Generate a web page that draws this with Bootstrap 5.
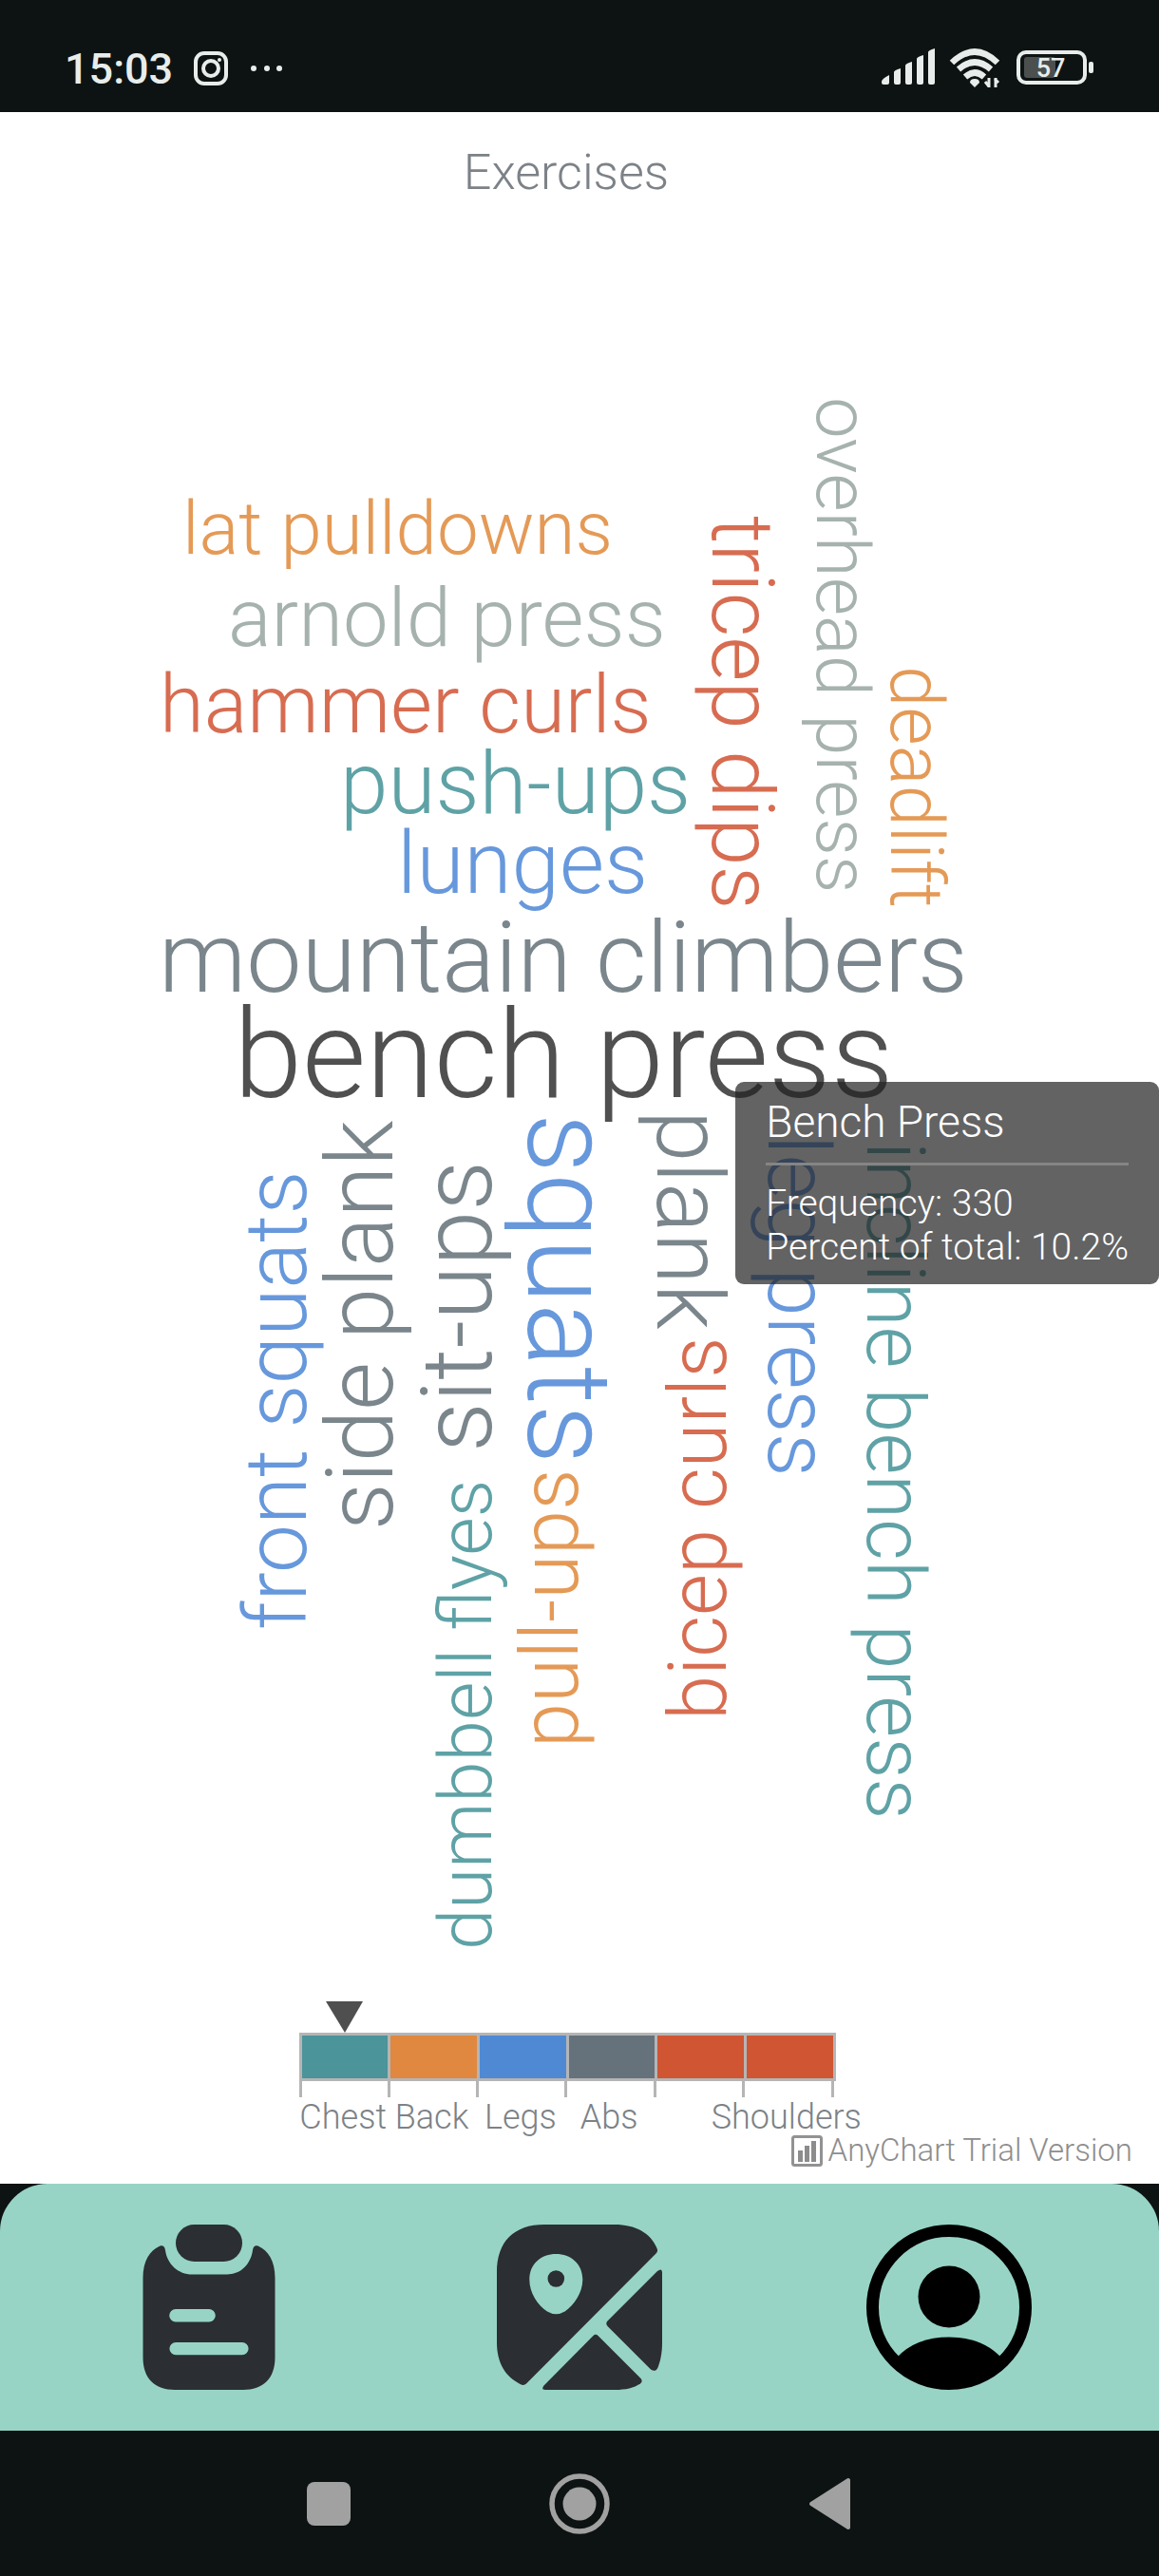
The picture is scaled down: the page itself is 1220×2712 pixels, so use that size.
<!DOCTYPE html>
<html lang="en">
<head>
<meta charset="utf-8">
<meta name="viewport" content="width=device-width, initial-scale=1">
<title>Exercises</title>
<link href="https://cdn.jsdelivr.net/npm/bootstrap@5.3.0/dist/css/bootstrap.min.css" rel="stylesheet">
<style>
  :root { --night: #0d1312; --mint: #97d4c5; --ink: #2b2e33; }
  body { font-family: Roboto, "Liberation Sans", sans-serif; font-weight: 300; background: var(--night); }
  svg { display: block; }

  .status-bar { height: 118px; padding: 41px 68px 0; color: #e8edeb; }
  .clock { font-size: 45px; line-height: 60px; font-weight: 500; padding-top: 2px; }
  .status-start { gap: 21px; }
  .status-end { gap: 15px; height: 60px; }

  .chart-title { font-size: 52px; line-height: 60px; font-weight: 300; color: #7c8287; padding: 34px 28px 0 0; }
  .cloud text { font-family: Roboto, "Liberation Sans", sans-serif; font-weight: 300; }
  .s78 { font-size: 78px; } .s85 { font-size: 85px; } .s91 { font-size: 91px; } .s98 { font-size: 98px; }
  .s104 { font-size: 104px; } .s124 { font-size: 124px; } .s130 { font-size: 130px; }
  .w-chest { fill: #5fa2a6; } .w-back { fill: #e49a56; } .w-legs { fill: #6798dc; }
  .w-abs { fill: #7a868c; } .w-arms { fill: #d76c51; } .w-shoulders { fill: #a6b2ae; } .w-hover { fill: #505050; }

  .tip { top: 48.9%; right: 0; padding: 16px 32px; border-radius: 9px; background: rgba(33, 33, 33, .7); color: #fff; }
  .tip-title { font-size: 46px; line-height: 52px; }
  .tip-rule { height: 3px; margin: 17px 0; background: #858585; }
  .tip-line { font-size: 39px; line-height: 46px; }

  .legend-box { padding-right: 26px; }
  .legend { width: 565px; }
  .marker { margin-left: 28px; }
  .swatches { gap: 3px; padding: 3px; background: #b5b5b5; }
  .swatch { height: 45px; }
  .c-chest { background: #4b949a; } .c-back { background: #e0883f; } .c-legs { background: #4f89d4; }
  .c-abs { background: #66727b; } .c-arms { background: #cf5533; }
  .ruler { width: 563px; height: 17px; border-right: 3px solid #b5b5b5; }
  .tick { border-left: 3px solid #b5b5b5; }
  .names { width: 560px; height: 39px; padding-top: 3px; font-size: 36px; line-height: 36px; color: #7c8287; }
  .names span { width: 0; }
  .credit { gap: 6px; padding: 0 28px 18px 0; font-size: 33px; line-height: 34px; color: #8e8e8e; }
  .credit a { color: inherit; }

  .tab-bar { height: 260px; padding: 0 134px 0 133px; border-radius: 50px 50px 0 0; background: var(--mint); }
  .system-bar { height: 153px; padding: 0 314px; }
</style>
<script src="https://cdn.jsdelivr.net/npm/bootstrap@5.3.0/dist/js/bootstrap.bundle.min.js"></script>
</head>
<body>

<header class="status-bar d-flex justify-content-between align-items-start">
  <div class="status-start d-flex align-items-center">
    <span class="clock">15:03</span>
    <svg width="96" height="40" viewBox="0 0 96 40" fill="none" stroke="#e8edeb" aria-label="Notifications">
      <rect x="3" y="4" width="32" height="32" rx="9" stroke-width="4"/>
      <circle cx="19" cy="20" r="8" stroke-width="4"/>
      <circle cx="28" cy="11" r="2" fill="#e8edeb" stroke="none"/>
      <g fill="#e8edeb" stroke="none"><circle cx="64" cy="20" r="3"/><circle cx="78" cy="20" r="3"/><circle cx="91" cy="20" r="3"/></g>
    </svg>
  </div>
  <div class="status-end d-flex align-items-center">
    <svg width="56" height="40" viewBox="0 0 56 40" fill="#e8edeb" aria-label="Signal">
      <path d="M0 35q0-3 8-7v8q0 2-2 2H2q-2 0-2-2z"/>
      <path d="M13 25q0-2 7-4v15q0 2-2 2h-3q-2 0-2-2z"/>
      <path d="M25 18q0-2 7-4v22q0 2-2 2h-3q-2 0-2-2z"/>
      <path d="M37 11q0-2 7-4v29q0 2-2 2h-3q-2 0-2-2z"/>
      <path d="M49 4q0-2 7-4v36q0 2-2 2h-3q-2 0-2-2z"/>
    </svg>
    <svg width="56" height="42" viewBox="0 0 56 42" fill="none" stroke="#e8edeb" stroke-width="6.500" aria-label="Wi-Fi">
      <path d="M3 16Q27-7 51 16"/><path d="M10 23Q27 8 44 23"/><path d="M17 31Q27 22 37 31"/>
      <path d="M27 42l-5-5q0-4 5-4t5 4z" fill="#e8edeb" stroke="none"/>
      <path d="M42 32v10M42 41l-4-5M49 42V32M48 33l4 4" stroke-width="3"/>
    </svg>
    <svg width="82" height="36" viewBox="0 0 82 36" aria-label="Battery 57 percent">
      <rect x="2" y="2" width="70" height="32" rx="8" fill="none" stroke="#e8edeb" stroke-width="4"/>
      <rect x="8" y="7" width="33" height="22" rx="3" fill="#4b504f"/>
      <rect x="76" y="12" width="5" height="12" rx="2" fill="#e8edeb"/>
      <text x="36" y="28" text-anchor="middle" font-size="27" font-weight="500" fill="#e8edeb">57</text>
    </svg>
  </div>
</header>

<main class="bg-white">
  <h1 class="chart-title text-center mb-0">Exercises</h1>

  <div class="position-relative">
    <svg class="cloud w-100 h-auto" viewBox="0 212 1220 1895" role="img" aria-label="Exercise word cloud">
      <text class="s78 w-back" x="192" y="583">lat pulldowns</text>
      <text class="s85 w-shoulders" x="240" y="680">arnold press</text>
      <text class="s85 w-arms" x="168" y="771">hammer curls</text>
      <text class="s91 w-chest" x="358" y="856">push-ups</text>
      <text class="s91 w-legs" x="418" y="940">lunges</text>
      <text class="s104 w-abs" x="167" y="1044">mountain climbers</text>
      <text class="s130 w-hover" x="246" y="1155">bench press</text>
      <text class="s91 w-arms" transform="translate(750 543) rotate(90)">tricep dips</text>
      <text class="s78 w-shoulders" transform="translate(860 418) rotate(90)">overhead press</text>
      <text class="s78 w-back" transform="translate(938 701) rotate(90)">deadlift</text>
      <text class="s91 w-legs" transform="translate(322 1716) rotate(-90)">front squats</text>
      <text class="s98 w-abs" transform="translate(413 1611) rotate(-90)">side plank</text>
      <text class="s104 w-abs" transform="translate(517 1529) rotate(-90)">sit-ups</text>
      <text class="s124 w-legs" transform="translate(556 1172) rotate(90)">squats</text>
      <text class="s78 w-chest" transform="translate(517 2053) rotate(-90)">dumbbell flyes</text>
      <text class="s85 w-back" transform="translate(608 1840) rotate(-90)">pull-ups</text>
      <text class="s98 w-abs" transform="translate(692 1169) rotate(90)">plank</text>
      <text class="s85 w-arms" transform="translate(764 1811) rotate(-90)">bicep curls</text>
      <text class="s91 w-legs" transform="translate(809 1195) rotate(90)">leg press</text>
      <text class="s85 w-chest" transform="translate(913 1202) rotate(90)">incline bench press</text>
    </svg>
    <div class="tip position-absolute" role="tooltip">
      <div class="tip-title">Bench Press</div>
      <div class="tip-rule"></div>
      <div class="tip-line">Frequency: 330</div>
      <div class="tip-line">Percent of total: 10.2%</div>
    </div>
  </div>

  <div class="legend-box d-flex justify-content-center">
    <div class="legend">
      <svg class="marker" width="39" height="33" viewBox="0 0 39 33" fill="#4f4f4f" aria-hidden="true"><path d="M0 0h39L20 33z"/></svg>
      <div class="swatches d-flex">
        <div class="swatch flex-fill c-chest"></div>
        <div class="swatch flex-fill c-back"></div>
        <div class="swatch flex-fill c-legs"></div>
        <div class="swatch flex-fill c-abs"></div>
        <div class="swatch flex-fill c-arms"></div>
        <div class="swatch flex-fill c-arms"></div>
      </div>
      <div class="ruler d-flex">
        <div class="tick flex-fill"></div><div class="tick flex-fill"></div><div class="tick flex-fill"></div>
        <div class="tick flex-fill"></div><div class="tick flex-fill"></div><div class="tick flex-fill"></div>
      </div>
      <div class="names d-flex">
        <div class="flex-fill d-flex justify-content-center"><span class="d-flex justify-content-center">Chest</span></div>
        <div class="flex-fill d-flex justify-content-center"><span class="d-flex justify-content-center">Back</span></div>
        <div class="flex-fill d-flex justify-content-center"><span class="d-flex justify-content-center">Legs</span></div>
        <div class="flex-fill d-flex justify-content-center"><span class="d-flex justify-content-center">Abs</span></div>
        <div class="flex-fill"></div>
        <div class="flex-fill d-flex justify-content-center"><span class="d-flex justify-content-center">Shoulders</span></div>
      </div>
    </div>
  </div>

  <div class="credit d-flex justify-content-end align-items-center">
    <svg width="33" height="33" viewBox="0 0 33 33" aria-hidden="true">
      <rect x="1.500" y="1.500" width="30" height="30" rx="2" fill="#fff" stroke="#929292" stroke-width="3"/>
      <path d="M7 16h5v12H7zM14 11h5v17h-5zM21 6h5v22h-5z" fill="#8c8c8c"/>
    </svg>
    <a class="text-decoration-none" href="#">AnyChart Trial Version</a>
  </div>
</main>

<nav class="tab-bar d-flex justify-content-between align-items-center" aria-label="Main">
  <a href="#" aria-label="Workouts">
    <svg width="174" height="174" viewBox="0 0 174 174" fill="#2b2e33">
      <rect x="52" y="0" width="70" height="39" rx="19.500"/>
      <path fill-rule="evenodd" d="M17.500 56C17.500 38 25 27 35 22.700C38.500 21.200 40.500 23.500 41 27C43 42 55 52.500 69 52.500H106C120 52.500 131 42 133 27C133.500 23.500 135.500 21.200 139 22.700C149 27 156.500 38 156.500 56V140C156.500 162 144 174 123 174H51C30 174 17.500 162 17.500 140ZM52 89a6.800 6.800 0 0 0 0 13.600H87a6.800 6.800 0 0 0 0-13.600ZM52 124a6.600 6.600 0 0 0 0 13.200H122a6.600 6.600 0 0 0 0-13.200Z"/>
    </svg>
  </a>
  <a href="#" aria-label="Map">
    <svg width="174" height="174" viewBox="0 0 174 174" fill="#2b2e33">
      <path fill-rule="evenodd" d="M50 0H124C146 0 162 9 168.500 25Q170 28 167.500 30.500L31 167.500Q28.500 170 25 168.200C9 160 0 146 0 124V50C0 18 18 0 50 0ZM62.300 31C47 31 34.300 41 34.300 58C34.300 72 43 85 53 91.500Q62.300 97 71.600 91.500C81 85 90.300 72 90.300 58C90.300 41 77.600 31 62.300 31Z"/>
      <circle cx="62.300" cy="57" r="8.800"/>
      <path d="M101.500 117Q104 114.500 106.500 117L151.500 162Q154 165 151 167.500C144 172 136 174 124 174H51.500Q46 174 49.500 169.500Z"/>
      <path d="M169 49Q174 45 174 51V124C174 136 172 144 169.500 150.500Q167 156 162 152.500L116.500 107Q114 104 116.500 101.500Z"/>
    </svg>
  </a>
  <a href="#" aria-label="Profile" aria-current="page">
    <svg width="174" height="174" viewBox="0 0 174 174">
      <circle cx="87" cy="87" r="80.500" fill="none" stroke="#000" stroke-width="13"/>
      <circle cx="87" cy="76" r="32.500"/>
      <path d="M32 140Q52 118.500 87 118.500T142 140Q120 172 87 172T32 140Z"/>
    </svg>
  </a>
</nav>

<footer class="system-bar d-flex justify-content-between align-items-center">
  <button class="btn p-0 border-0" type="button" aria-label="Recent apps">
    <svg width="64" height="64" viewBox="0 0 64 64"><rect x="9" y="9" width="46" height="46" rx="8" fill="#a1a1a1"/></svg>
  </button>
  <button class="btn p-0 border-0" type="button" aria-label="Home">
    <svg width="64" height="64" viewBox="0 0 64 64"><circle cx="32" cy="32" r="29" fill="none" stroke="#a1a1a1" stroke-width="5.500"/><circle cx="32" cy="32" r="17.500" fill="#a1a1a1"/></svg>
  </button>
  <button class="btn p-0 border-0" type="button" aria-label="Back">
    <svg width="64" height="64" viewBox="0 0 64 64"><path d="M12 32L51 7V57Z" fill="#a1a1a1" stroke="#a1a1a1" stroke-width="4" stroke-linejoin="round"/></svg>
  </button>
</footer>

</body>
</html>
